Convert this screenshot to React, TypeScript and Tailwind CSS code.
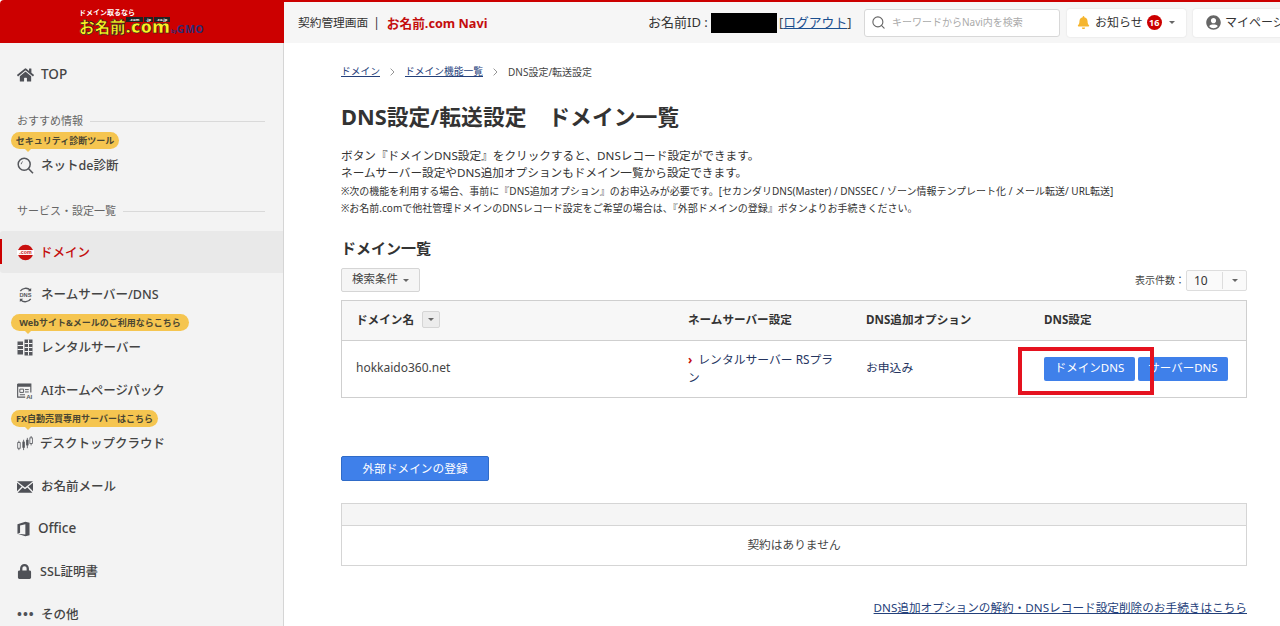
import React from "react";
import { FaBell, FaHome, FaLock, FaUserCircle } from "react-icons/fa";
import { Search } from "lucide-react";

function Badge({ text, w }: { text: string; w: string }) {
  return (
    <span className={`absolute left-[11px] top-[-12px] z-10 flex h-[17px] ${w} items-center justify-center rounded-full bg-[#f5c550] text-[9px] font-bold leading-none text-[#4a4632] whitespace-nowrap`}>
      {text}
      <span className="absolute left-[13px] top-[16px] h-0 w-0 border-x-[4px] border-t-[4px] border-x-transparent border-t-[#f5c550]" />
    </span>
  );
}

function Row({ icon, label, gap = "gap-[7px]", className = "", labelClass = "text-[#444] text-[12.5px] pt-[2px]", badge }: { icon: React.ReactNode; label: string; gap?: string; className?: string; labelClass?: string; badge?: React.ReactNode }) {
  return (
    <div className={`relative flex h-[43px] items-center pl-[17px] ${gap} ${className}`}>
      {badge}
      <span className="flex h-[18px] w-[17px] shrink-0 items-center justify-start text-[#4f5157]">{icon}</span>
      <span className={`font-medium whitespace-nowrap ${labelClass}`}>{label}</span>
    </div>
  );
}

function SectionLabel({ text }: { text: string }) {
  return (
    <div className="flex h-5 items-center pl-[17px] pr-[18px]">
      <span className="text-[11px] text-[#666] whitespace-nowrap">{text}</span>
      <span className="ml-[7px] h-px flex-1 bg-[#d9d9d9]" />
    </div>
  );
}

function Caret({ className = "" }: { className?: string }) {
  return <span className={`inline-block h-0 w-0 border-x-[3px] border-t-[3px] border-x-transparent border-t-[#666] ${className}`} />;
}

function Chevron() {
  return (
    <svg viewBox="0 0 5 8" className="mx-[10px] h-[8px] w-[5px] shrink-0">
      <path d="M0.6 0.6 4 4 0.6 7.4" fill="none" stroke="#8a8a8a" strokeWidth="0.9" />
    </svg>
  );
}

const SearchGlyph = (
  <svg viewBox="0 0 17 17" className="h-[17px] w-[17px]">
    <circle cx="7.2" cy="7.2" r="6" fill="none" stroke="#55575c" strokeWidth="1.5" />
    <path d="M11.6 11.8 16 16.2" stroke="#55575c" strokeWidth="1.6" />
    <path d="M4.2 7.2a3 3 0 0 1 1.6-2.6" fill="none" stroke="#55575c" strokeWidth="0.9" />
  </svg>
);
const DomainIcon = (
  <svg viewBox="0 0 18 18" className="h-[17px] w-[17px]">
    <circle cx="9" cy="9" r="8.2" fill="#c9100f" />
    <rect x="0" y="6.4" width="18" height="5.2" fill="#fff" />
    <text x="9" y="10.9" textAnchor="middle" fontSize="5.6" fontWeight="700" fill="#c9100f" fontFamily="Liberation Sans, sans-serif">.com</text>
  </svg>
);
const DnsIcon = (
  <svg viewBox="0 0 18 18" className="h-[18px] w-[18px]">
    <path d="M3.5 5 A7 7 0 0 1 14 3.6" fill="none" stroke="#55575c" strokeWidth="1.4" />
    <path d="M14.5 13 A7 7 0 0 1 4 14.4" fill="none" stroke="#55575c" strokeWidth="1.4" />
    <path d="M15 1.5v3.6h-3.6zM3 16.5v-3.6h3.6z" fill="#55575c" />
    <text x="9" y="11" textAnchor="middle" fontSize="6" fontWeight="700" fill="#55575c" fontFamily="Liberation Sans, sans-serif">DNS</text>
  </svg>
);
const ServerIcon = (
  <svg viewBox="0 0 16 17" className="h-[17px] w-[16px]">
    <path d="M0.5 2.5h5.5v13H0.5zM7.5 0.5h8v16h-8z" fill="#55575c" />
    <path d="M0.5 6.5h5.5M0.5 10.5h5.5M7.5 4.5h8M7.5 8.5h8M7.5 12.5h8M11.5 0.5v16" stroke="#f3f3f3" strokeWidth="1" />
  </svg>
);
const AiIcon = (
  <svg viewBox="0 0 17 17" className="h-[16px] w-[16px]">
    <path d="M0.7 1h14v9M0.7 1v14h8" fill="none" stroke="#55575c" strokeWidth="1.2" />
    <rect x="0.7" y="1" width="14" height="3" fill="#55575c" />
    <path d="M3 6.5h4v3.5H3zM8.5 7h4M8.5 9.5h4M3 12.5h5.5" fill="none" stroke="#55575c" strokeWidth="1" />
    <text x="13" y="16.5" textAnchor="middle" fontSize="6.6" fontWeight="700" fill="#55575c" fontFamily="Liberation Sans, sans-serif">AI</text>
  </svg>
);
const ChartIcon = (
  <svg viewBox="0 0 17 17" className="h-[16px] w-[16px]">
    <path d="M2 5v10M7 4v11M11 2v11M15 0v10" stroke="#55575c" strokeWidth="0.9" />
    <rect x="0.8" y="7" width="2.6" height="6" fill="#fff" stroke="#55575c" strokeWidth="0.9" />
    <rect x="5.7" y="6" width="2.6" height="6.5" fill="#55575c" />
    <rect x="9.7" y="4" width="2.6" height="6" fill="#55575c" />
    <rect x="13.7" y="2" width="2.6" height="6" fill="#fff" stroke="#55575c" strokeWidth="0.9" />
  </svg>
);
const MailIcon = (
  <svg viewBox="0 0 17 12" className="h-[12px] w-[16px]">
    <path d="M0 0h17L8.5 6.5zM0 1.6v9l5-5.2zM17 1.6v9l-5-5.2zM0.6 12l5.4-5.6 2.5 2 2.5-2 5.4 5.6z" fill="#4f5157" />
  </svg>
);
const OfficeIcon = (
  <svg viewBox="0 0 14 17" className="h-[16px] w-[13px]">
    <path d="M0.5 3.5 9 .6l4.5 1.3v13.2L9 16.3.5 13.5l8.5 1V3.4L3.3 4.6v8l-2.8 .9z" fill="#4f5157" />
  </svg>
);

function Logo() {
  return (
    <div className="relative flex w-[128px] flex-col leading-none">
      <span className="h-[9px] text-[7px] font-bold leading-[9px] text-white whitespace-nowrap">ドメイン取るなら</span>
      <div className="flex h-[20px] items-baseline whitespace-nowrap">
        <span className="text-[15.5px] font-black leading-[20px] text-[#fff21f] [-webkit-text-stroke:0.6px_#222]">お名前</span>
        <span className="text-[18px] font-black leading-[12px] text-[#fff21f] [-webkit-text-stroke:0.6px_#222]">.com</span>
        <span className="ml-[1px] text-[5px] font-bold text-[#2c2c74]">by</span>
        <span className="text-[10.5px] font-bold tracking-[0.5px] text-[#2c2c74]">GMO</span>
      </div>
      <div className="absolute left-[47px] top-[9px] flex gap-[1px] text-[4px] font-bold leading-[5px] text-white">
        <span className="w-[17px] bg-[#222] text-center">.com</span>
        <span className="w-[9px] bg-[#222] text-center">.jp</span>
        <span className="w-[16px] bg-[#222] text-center">.co.jp</span>
      </div>
    </div>
  );
}

function Header() {
  return (
    <header className="flex h-[43px] shrink-0">
      <div className="flex h-full w-[284px] shrink-0 items-start rounded-tl-[4px] bg-[#cc0000] pl-[79px] pt-[8px]">
        <Logo />
      </div>
      <div className="flex min-w-0 flex-1 flex-col">
        <div className="h-[2px] bg-[#cc0000]" />
        <div className="flex min-w-0 flex-1 items-center bg-[#f6f6f6] pl-[14px]">
          <span className="text-[11.7px] text-[#333] whitespace-nowrap">契約管理画面</span>
          <span className="ml-[5px] mr-[7px] text-[12px] text-[#333]">|</span>
          <span className="pt-[2px] text-[12.7px] font-bold text-[#c40d0d] whitespace-nowrap">お名前.com Navi</span>
          <div className="ml-auto flex w-[632px] shrink-0 items-center [&>*]:shrink-0">
            <span className="w-[63px] text-[13px] text-[#333] whitespace-nowrap">お名前ID :</span>
            <span className="h-[20px] w-[66px] bg-black" />
            <span className="ml-[2px] w-[73px] text-[12.8px] text-[#444] whitespace-nowrap">
              [<a className="text-[#1b4f8f] underline">ログアウト</a>]
            </span>
            <div className="ml-[12px] flex h-[28px] w-[196px] items-center rounded-[3px] border border-[#d8d8d8] bg-white pl-[6px]">
              <Search className="h-[15px] w-[15px] text-[#666]" strokeWidth={1.8} />
              <span className="ml-[6px] text-[10px] text-[#aaa] whitespace-nowrap">キーワードからNavi内を検索</span>
            </div>
            <div className="ml-[7px] flex h-[28px] w-[119px] items-center rounded-[3px] bg-white pl-[10px] shadow-[0_0_2px_rgba(0,0,0,0.12)]">
              <FaBell className="h-[13px] w-[13px] text-[#f5b52e]" />
              <span className="ml-[5px] text-[12px] text-[#333] whitespace-nowrap">お知らせ</span>
              <span className="ml-[4px] flex h-[15px] w-[15px] items-center justify-center rounded-full bg-[#cc0000] text-[9px] font-bold leading-none text-white">16</span>
              <Caret className="ml-[7px]" />
            </div>
            <div className="ml-[7px] flex h-[28px] w-[110px] items-center rounded-[3px] bg-white pl-[13px] shadow-[0_0_2px_rgba(0,0,0,0.12)]">
              <FaUserCircle className="h-[15px] w-[15px] text-[#666]" />
              <span className="ml-[4px] text-[12px] text-[#333] whitespace-nowrap">マイページ</span>
            </div>
          </div>
        </div>
      </div>
    </header>
  );
}

function Sidebar() {
  return (
    <aside className="w-[284px] shrink-0 border-r border-[#d5d5d5] bg-[#f3f3f3] pt-[10px]">
      <Row icon={<FaHome className="h-[16px] w-[17px]" />} label="TOP" labelClass="text-[#444] text-[13.5px]" />
      <div className="h-[15px]" />
      <SectionLabel text="おすすめ情報" />
      <div className="h-[13px]" />
      <Row icon={SearchGlyph} label="ネットde診断" badge={<Badge text="セキュリティ診断ツール" w="w-[108px]" />} />
      <div className="h-[14px]" />
      <SectionLabel text="サービス・設定一覧" />
      <div className="h-[10px]" />
      <div className="relative h-[42px]">
        <Row icon={DomainIcon} label="ドメイン" gap="gap-[6px]" labelClass="text-[#c40d0d] text-[12.5px] pt-[2px]" className="!h-[42px] rounded-l-[3px] bg-[#e9e9e9]" />
        <span className="absolute left-0 top-[8px] h-[25px] w-[2px] bg-[#cc0000]" />
      </div>
      <Row icon={DnsIcon} label="ネームサーバー/DNS" />
      <div className="h-[10px]" />
      <Row icon={ServerIcon} label="レンタルサーバー" badge={<Badge text="Webサイト&メールのご利用ならこちら" w="w-[178px]" />} />
      <Row icon={AiIcon} label="AIホームページパック" />
      <div className="h-[10px]" />
      <Row icon={ChartIcon} label="デスクトップクラウド" gap="gap-[6px]" badge={<Badge text="FX自動売買専用サーバーはこちら" w="w-[147px]" />} />
      <Row icon={MailIcon} label="お名前メール" />
      <Row icon={OfficeIcon} label="Office" gap="gap-[4px]" labelClass="text-[#444] text-[13.5px]" className="-mt-px" />
      <Row icon={<FaLock className="h-[15px] w-[15px]" />} label="SSL証明書" gap="gap-[6px]" />
      <Row icon={<span className="text-[13px] font-bold leading-none tracking-[1px]">•••</span>} label="その他" />
    </aside>
  );
}

function Main() {
  return (
    <main className="min-w-0 flex-1 bg-white pl-[57px] pr-[33px] pt-[22px] text-[#333]">
      <nav className="flex h-[14px] items-center text-[9.75px]">
        <a className="text-[#24407a] underline">ドメイン</a>
        <Chevron />
        <a className="text-[#24407a] underline">ドメイン機能一覧</a>
        <Chevron />
        <span className="text-[10px] text-[#444]">DNS設定/転送設定</span>
      </nav>
      <h1 className="mt-[22px] h-[32px] text-[21.8px] font-bold leading-[32px] text-[#333] whitespace-pre">DNS設定/転送設定　ドメイン一覧</h1>
      <div className="mt-[14px] text-[11.65px] leading-[17px]">
        <p>ボタン『ドメインDNS設定』をクリックすると、DNSレコード設定ができます。</p>
        <p>ネームサーバー設定やDNS追加オプションもドメイン一覧から設定できます。</p>
      </div>
      <div className="mt-[2px] text-[10px] leading-[17px]">
        <p>※次の機能を利用する場合、事前に『DNS追加オプション』のお申込みが必要です。[セカンダリDNS(Master) / DNSSEC / ゾーン情報テンプレート化 / メール転送/ URL転送]</p>
        <p>※お名前.comで他社管理ドメインのDNSレコード設定をご希望の場合は、『外部ドメインの登録』ボタンよりお手続きください。</p>
      </div>
      <h2 className="mt-[19px] h-[24px] text-[15px] font-bold leading-[24px]">ドメイン一覧</h2>
      <div className="mt-[8px] flex h-[24px] items-center justify-between">
        <button className="flex h-[24px] w-[79px] items-center justify-center gap-[5px] rounded-[2px] border border-[#d5d5d5] bg-[#f5f5f5] pb-[2px] text-[11.5px] text-[#444]">
          検索条件<Caret className="mt-[2px]" />
        </button>
        <div className="flex items-center">
          <span className="mr-[1px] text-[10px] text-[#444] whitespace-nowrap">表示件数：</span>
          <div className="flex h-[21px] w-[61px] items-center rounded-[2px] border border-[#ddd] bg-[#fafafa]">
            <span className="w-[36px] border-r border-[#ddd] pl-[7px] text-[12px] leading-[17px] text-[#333]">10</span>
            <span className="flex flex-1 justify-center"><Caret /></span>
          </div>
        </div>
      </div>
      <div className="relative mt-[8px] border border-[#cfcfcf]">
        <div className="grid h-[40px] grid-cols-[331px_178px_178px_1fr] items-center border-b border-[#cfcfcf] bg-[#f7f7f7] pb-[2px] text-[11.6px] font-bold text-[#333]">
          <div className="flex items-center pl-[14px]">
            ドメイン名
            <span className="ml-[8px] flex h-[17px] w-[18px] items-center justify-center rounded-[2px] border border-[#d5d5d5] bg-[#ececec]"><Caret /></span>
          </div>
          <div className="pl-[15px]">ネームサーバー設定</div>
          <div className="pl-[15px]">DNS追加オプション</div>
          <div className="pl-[15px]">DNS設定</div>
        </div>
        <div className="grid h-[56px] grid-cols-[331px_178px_178px_1fr] items-center text-[11.8px]">
          <div className="pb-[2px] pl-[14px] text-[12px] text-[#444]">hokkaido360.net</div>
          <div className="w-[163px] pb-[2px] pl-[15px] leading-[18px] text-[#24345f]">
            <span className="mr-[6px] font-bold text-[#c40d0d]">›</span>
            レンタルサーバー RSプラン
          </div>
          <div className="pb-[2px] pl-[15px] text-[#24345f]">お申込み</div>
          <div className="flex gap-[3px] pl-[15px]">
            <button className="h-[24px] w-[91px] rounded-[2px] bg-[#3f80ea] pb-[2px] text-[11.5px] text-white">ドメインDNS</button>
            <button className="h-[24px] w-[90px] rounded-[2px] bg-[#3f80ea] pb-[2px] text-[11.5px] text-white">サーバーDNS</button>
          </div>
        </div>
        <div className="absolute left-[676px] top-[46px] h-[48px] w-[136px] border-4 border-[#e5121f]" />
      </div>
      <button className="mt-[58px] block h-[25px] w-[148px] rounded-[2px] border border-[#2f6bc8] bg-[#3f80ea] text-[11.7px] text-white">外部ドメインの登録</button>
      <div className="mt-[22px] border border-[#d5d5d5]">
        <div className="h-[22px] border-b border-[#d5d5d5] bg-[#f5f5f5]" />
        <div className="flex h-[39px] items-center justify-center pb-[2px] text-[11.7px] text-[#444]">契約はありません</div>
      </div>
      <div className="mt-[33px] flex h-[18px] items-center justify-end">
        <a className="text-[11.65px] text-[#24407a] underline">DNS追加オプションの解約・DNSレコード設定削除のお手続きはこちら</a>
      </div>
    </main>
  );
}

export default function App() {
  return (
    <div className="flex h-[626px] w-[1280px] flex-col overflow-hidden bg-white font-['Noto_Sans','Noto_Sans_CJK_JP',sans-serif]">
      <Header />
      <div className="flex min-h-0 flex-1">
        <Sidebar />
        <Main />
      </div>
    </div>
  );
}
